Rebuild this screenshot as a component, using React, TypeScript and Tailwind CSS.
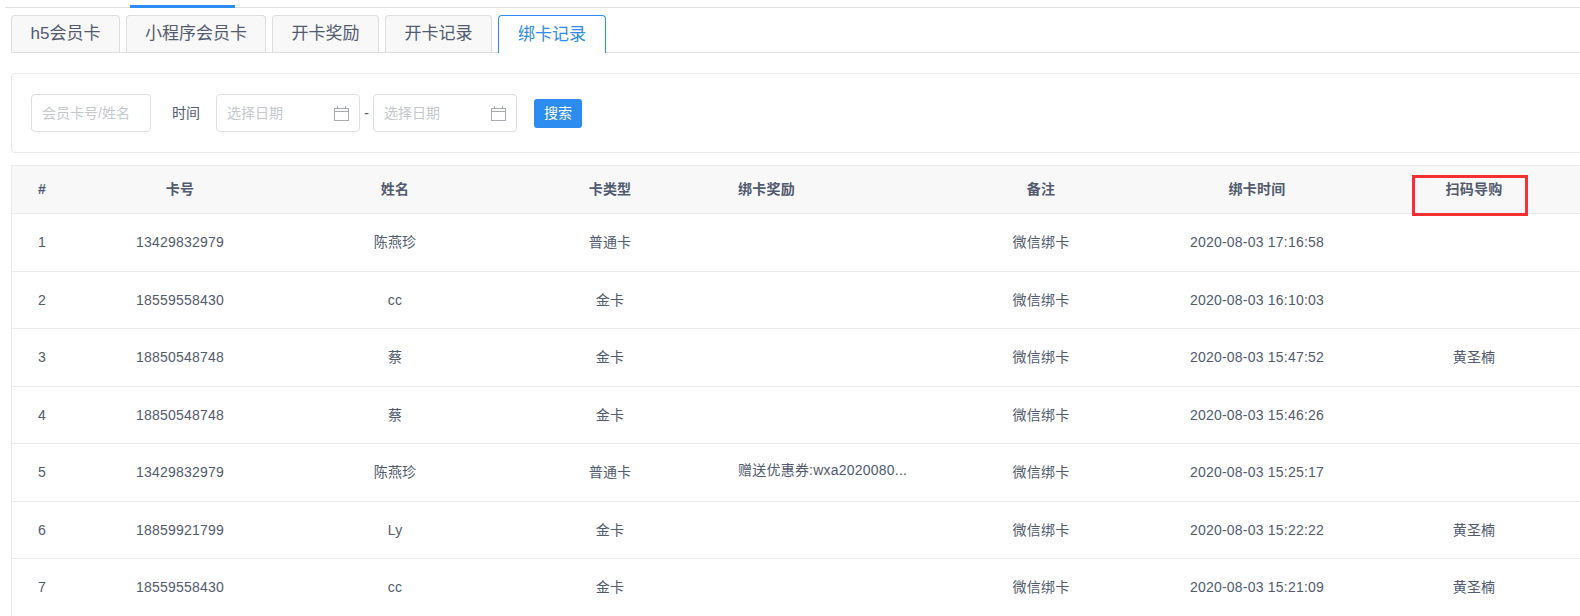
const rows = [
  { id: 1, card: "13429832979", name: "陈燕珍", type: "普通卡", reward: "", time: "2020-08-03 17:16:58", guide: "" },
  { id: 2, card: "18559558430", name: "cc", type: "金卡", reward: "", time: "2020-08-03 16:10:03", guide: "" },
  { id: 3, card: "18850548748", name: "蔡", type: "金卡", reward: "", time: "2020-08-03 15:47:52", guide: "黄圣楠" },
  { id: 4, card: "18850548748", name: "蔡", type: "金卡", reward: "", time: "2020-08-03 15:46:26", guide: "" },
  { id: 5, card: "13429832979", name: "陈燕珍", type: "普通卡", reward: "赠送优惠券:wxa2020080...", time: "2020-08-03 15:25:17", guide: "" },
  { id: 6, card: "18859921799", name: "Ly", type: "金卡", reward: "", time: "2020-08-03 15:22:22", guide: "黄圣楠" },
  { id: 7, card: "18559558430", name: "cc", type: "金卡", reward: "", time: "2020-08-03 15:21:09", guide: "黄圣楠" },
];

const tabs = ["h5会员卡", "小程序会员卡", "开卡奖励", "开卡记录", "绑卡记录"];

const gridCols = "grid grid-cols-[60px_216px_214px_216px_219px_208px_224px_210px_1fr]";

const CalendarIcon = () => (
  <svg width="15" height="15" viewBox="0 0 15 15" fill="none" stroke="#a8abb2" strokeWidth="1">
    <rect x="0.5" y="2.5" width="14" height="12" />
    <path d="M0.5 5.5h14M3.5 0v3M11.5 0v3" />
  </svg>
);

const DateInput = () => (
  <div className="flex h-[38px] w-[144px] items-center justify-between rounded border border-[#dcdee2] bg-white px-[10px] text-[#c5c8ce]">
    <span>选择日期</span>
    <CalendarIcon />
  </div>
);

const App = () => {
  return (
    <div className="relative h-[616px] w-[1580px] overflow-hidden bg-white text-[14px] text-[#515a6e] [font-family:'Liberation_Sans','Noto_Sans_CJK_SC',sans-serif]">
      {/* top nav remnant */}
      <div className="ml-[5px] h-[8px] border-b border-[#dcdee2]">
        <div className="ml-[125px] h-[8px] w-[105px] border-b-[3px] border-[#2d8cf0]" />
      </div>

      {/* tabs */}
      <div className="ml-[11px] mt-[7px] flex h-[38px] w-[1600px] gap-[6px] border-b border-[#dcdee2] text-[17px]">
        {tabs.map((tab, i) =>
          i === 4 ? (
            <div
              key={tab}
              className="flex h-[38px] w-[108px] items-center justify-center rounded-t border border-b-0 border-[#2d8cf0] bg-white text-[#2d8cf0]"
            >
              {tab}
            </div>
          ) : (
            <div
              key={tab}
              className={`flex h-[37px] items-center justify-center rounded-t border border-b-0 border-[#dcdee2] bg-[#f8f8f9] ${
                i === 0 ? "w-[109px]" : i === 1 ? "w-[140px]" : "w-[107px]"
              }`}
            >
              {tab}
            </div>
          )
        )}
      </div>

      {/* search */}
      <div className="ml-[11px] mt-[20px] flex h-[80px] w-[1600px] items-center rounded border border-[#e8eaec] pl-[19px]">
        <div className="flex h-[38px] w-[120px] items-center rounded border border-[#dcdee2] pl-[10px] text-[#c5c8ce]">
          会员卡号/姓名
        </div>
        <span className="ml-[21px] w-[44px]">时间</span>
        <DateInput />
        <span className="w-[13px] text-center">-</span>
        <DateInput />
        <button
          type="button"
          className="ml-[17px] h-[29px] w-[48px] rounded-[3px] bg-[#2d8cf0] text-white"
        >
          搜索
        </button>
      </div>

      {/* table */}
      <div className="ml-[11px] mt-[12px] w-[1600px] border-l border-t border-[#e8eaec] tracking-[0.22px]">
        <div className={`${gridCols} h-[48px] items-center border-b border-[#e8eaec] bg-[#f8f8f9] text-center font-bold`}>
          <div>#</div>
          <div>卡号</div>
          <div>姓名</div>
          <div>卡类型</div>
          <div className="pl-[20px] text-left">绑卡奖励</div>
          <div>备注</div>
          <div>绑卡时间</div>
          <div>扫码导购</div>
          <div />
        </div>
        {rows.map((row) => (
          <div
            key={row.id}
            className={`${gridCols} h-[57.5px] items-center border-b border-[#e8eaec] pt-[1px] text-center`}
          >
            <div>{row.id}</div>
            <div>{row.card}</div>
            <div>{row.name}</div>
            <div>{row.type}</div>
            <div className="-translate-y-[2px] whitespace-nowrap pl-[20px] text-left">{row.reward}</div>
            <div>微信绑卡</div>
            <div>{row.time}</div>
            <div>{row.guide}</div>
            <div />
          </div>
        ))}
      </div>

      {/* red annotation box */}
      <div className="absolute left-[1412px] top-[175px] h-[41px] w-[116px] border-[3px] border-[#f73131]" />
    </div>
  );
};

export default App;
